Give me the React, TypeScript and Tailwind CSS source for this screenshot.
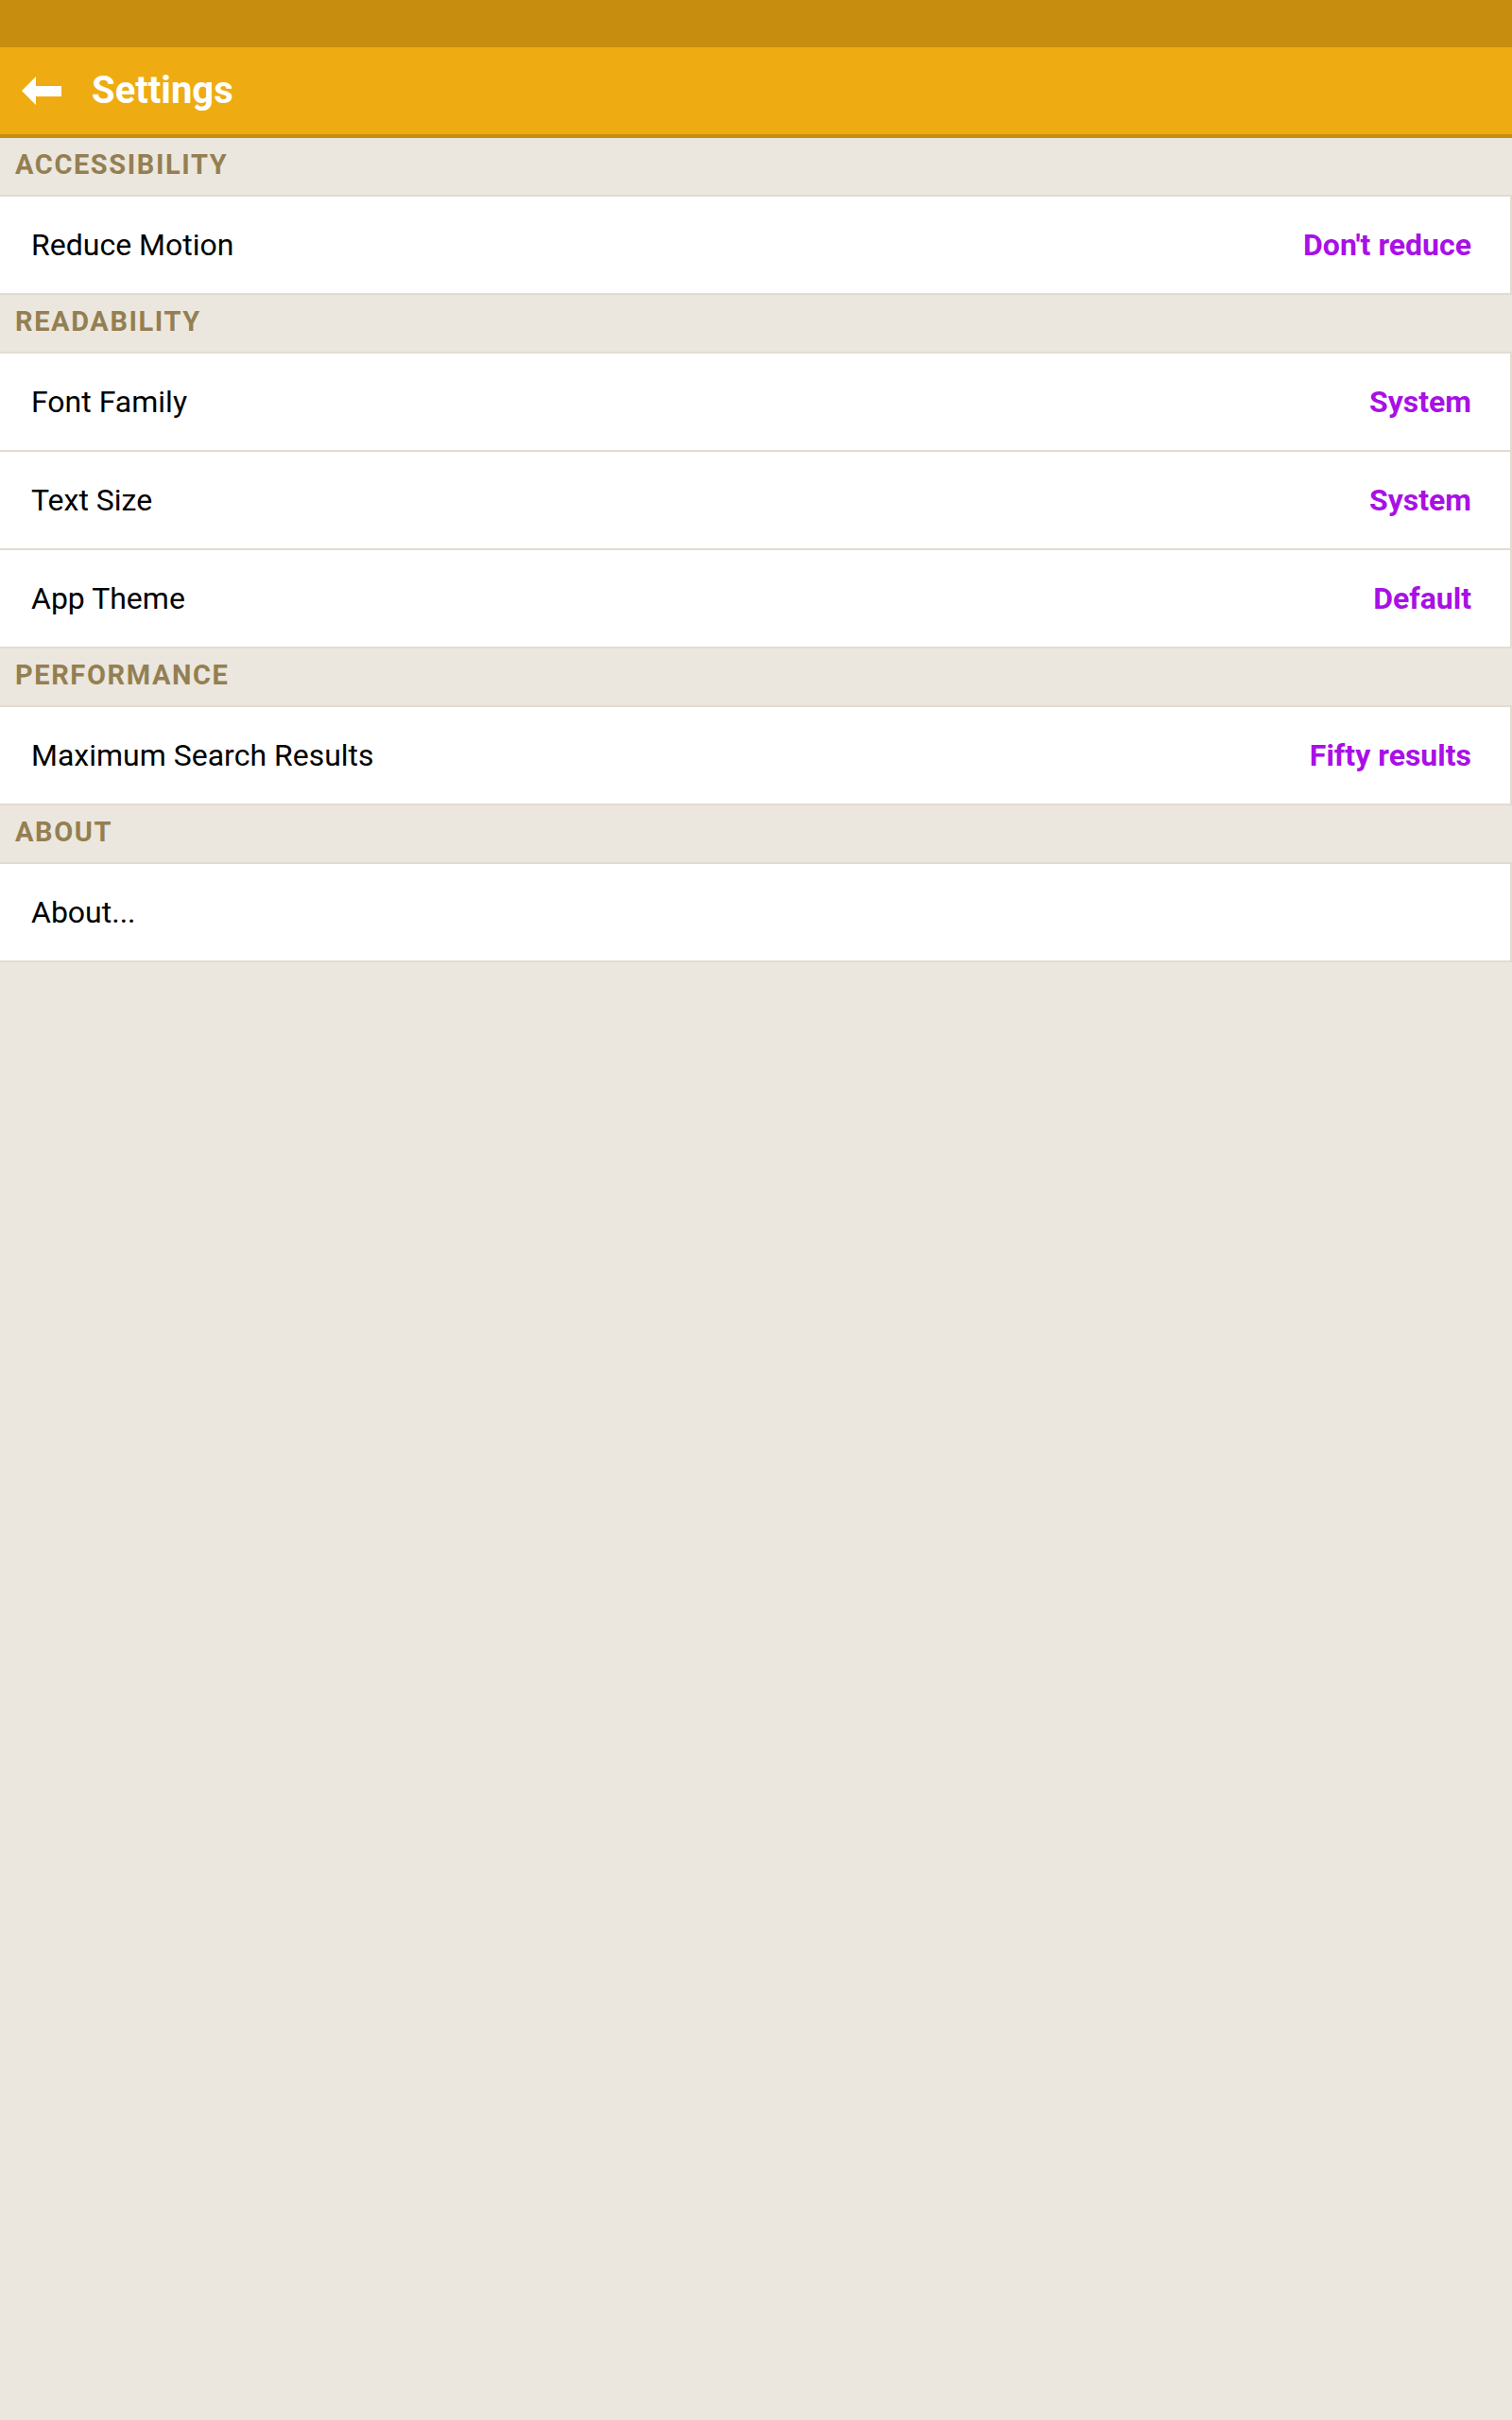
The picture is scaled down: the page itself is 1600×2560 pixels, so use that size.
import React from 'react';

type Row = { label: string; value?: string };
type Section = { title: string; rows: Row[] };

const sections: Section[] = [
    { title: 'Accessibility', rows: [{ label: 'Reduce Motion', value: "Don't reduce" }] },
    {
        title: 'Readability',
        rows: [
            { label: 'Font Family', value: 'System' },
            { label: 'Text Size', value: 'System' },
            { label: 'App Theme', value: 'Default' },
        ],
    },
    { title: 'Performance', rows: [{ label: 'Maximum Search Results', value: 'Fifty results' }] },
    { title: 'About', rows: [{ label: 'About...' }] },
];

function BackArrow() {
    return (
        <svg width="44" height="32" viewBox="0 0 44 32" aria-hidden="true">
            <polygon points="1,16 16,1 16,11 43,11 43,22 16,22 16,31" fill="#ffffff" />
        </svg>
    );
}

export default function App() {
    return (
        <div className="min-h-[2560px] w-[1600px] bg-[#ebe7de] font-['Roboto','Liberation_Sans',sans-serif]">
            {/* Status bar */}
            <div className="h-[50px] bg-[#c68d0e]" />

            {/* Toolbar */}
            <div className="flex h-[96px] items-center border-b-4 border-[#c68d0e] bg-[#eeac12]">
                <div className="ml-[22px] flex h-[32px] items-center">
                    <BackArrow />
                </div>
                <h1 className="ml-[31px] text-[40px] font-bold leading-none text-white">Settings</h1>
            </div>

            {/* Settings list */}
            {sections.map((section) => (
                <div key={section.title}>
                    <div className="flex h-[62px] items-center border-b-2 border-[#e2dcd0] px-4 pb-[3px]">
                        <span className="text-[29px] font-bold uppercase leading-none tracking-[0.055em] text-[#947f52]">
                            {section.title}
                        </span>
                    </div>
                    {section.rows.map((row) => (
                        <div
                            key={row.label}
                            className="flex h-[104px] items-center justify-between border-r-2 border-b-2 border-[#e2dcd0] bg-white pl-[33px] pr-[41px]"
                        >
                            <span className="text-[32px] leading-none text-black">{row.label}</span>
                            {row.value && (
                                <span className="text-[32px] font-bold leading-none text-[#a810e6]">{row.value}</span>
                            )}
                        </div>
                    ))}
                </div>
            ))}
        </div>
    );
}
